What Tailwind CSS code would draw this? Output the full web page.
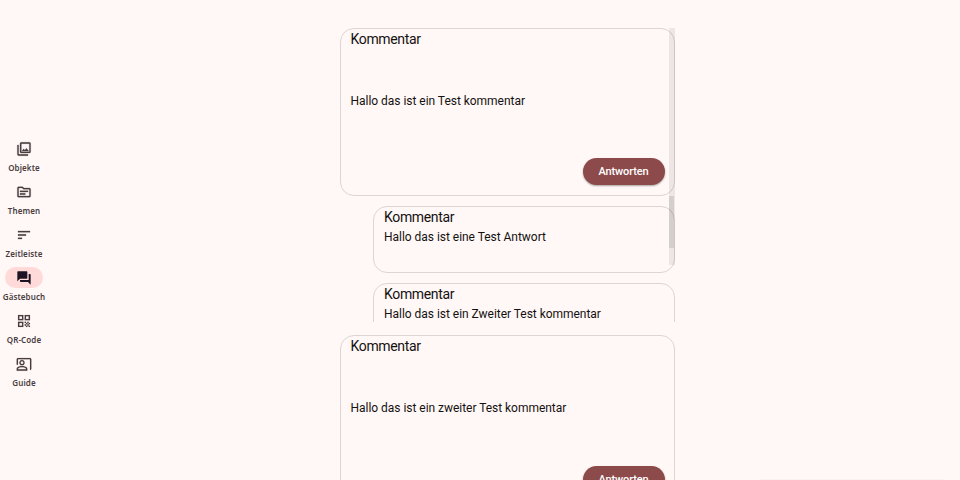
<!DOCTYPE html>
<html lang="de">
<head>
<meta charset="utf-8">
<title>Gästebuch</title>
<script src="https://cdn.jsdelivr.net/npm/@tailwindcss/browser@4"></script>
</head>
<body class="h-[480px] w-[960px] overflow-hidden bg-[#fff8f6] font-[Roboto,sans-serif] text-[#201a1a]">
<div class="relative flex h-[480px] overflow-hidden">
  <nav class="flex w-12 shrink-0 flex-col pt-[138px] text-center font-['Noto_Sans','Open_Sans',sans-serif] text-[8px] leading-[11px] font-semibold tracking-[0.1px] whitespace-nowrap text-[#4a3d41]">
    <a class="flex h-[43px] flex-col items-center gap-[3px]"><span class="flex h-[21px] w-[38px] items-center justify-center rounded-full"><svg class="size-4" viewBox="0 0 24 24" fill="currentColor" stroke="currentColor" stroke-width="0.4"><path d="M20 4v12H8V4h12m0-2H8c-1.1 0-2 .9-2 2v12c0 1.1.9 2 2 2h12c1.1 0 2-.9 2-2V4c0-1.1-.9-2-2-2zm-8.5 9.67l1.69 2.26 2.48-3.1L19 15H9zM2 6v14c0 1.1.9 2 2 2h14v-2H4V6H2z"/></svg></span><span>Objekte</span></a>
    <a class="flex h-[43px] flex-col items-center gap-[3px]"><span class="flex h-[21px] w-[38px] items-center justify-center rounded-full"><svg class="size-4" viewBox="0 0 24 24" fill="currentColor" stroke="currentColor" stroke-width="0.4"><path d="M20 6h-8l-2-2H4c-1.1 0-2 .9-2 2v12c0 1.1.9 2 2 2h16c1.1 0 2-.9 2-2V8c0-1.1-.9-2-2-2zm0 12H4V6h5.17l2 2H20v10zm-2-6H6v-2h12v2zm-4 4H6v-2h8v2z"/></svg></span><span>Themen</span></a>
    <a class="flex h-[43px] flex-col items-center gap-[3px]"><span class="flex h-[21px] w-[38px] items-center justify-center rounded-full"><svg class="size-4" viewBox="0 0 24 24" fill="currentColor" stroke="currentColor" stroke-width="0.4"><path d="M3 18h6v-2H3v2zM3 6v2h18V6H3zm0 7h12v-2H3v2z"/></svg></span><span>Zeitleiste</span></a>
    <a class="flex h-[43px] flex-col items-center gap-[3px]"><span class="flex h-[21px] w-[38px] items-center justify-center rounded-full bg-[#ffdad9] text-[#1c1424]"><svg class="size-4" viewBox="0 0 24 24" fill="currentColor"><path d="M21 6h-2v9H6v2c0 .55.45 1 1 1h11l4 4V7c0-.55-.45-1-1-1zm-4 6V3c0-.55-.45-1-1-1H3c-.55 0-1 .45-1 1v14l4-4h10c.55 0 1-.45 1-1z"/></svg></span><span>Gästebuch</span></a>
    <a class="flex h-[43px] flex-col items-center gap-[3px]"><span class="flex h-[21px] w-[38px] items-center justify-center rounded-full"><svg class="size-4" viewBox="0 0 24 24" fill="currentColor" stroke="currentColor" stroke-width="0.2"><path d="M3 11h8V3H3v8zm2-6h4v4H5V5zM3 21h8v-8H3v8zm2-6h4v4H5v-4zM13 3v8h8V3h-8zm6 6h-4V5h4v4zM19 19h2v2h-2zM13 13h2v2h-2zM15 15h2v2h-2zM13 17h2v2h-2zM15 19h2v2h-2zM17 17h2v2h-2zM17 13h2v2h-2zM19 15h2v2h-2z"/></svg></span><span>QR-Code</span></a>
    <a class="flex h-[43px] flex-col items-center gap-[3px]"><span class="flex h-[21px] w-[38px] items-center justify-center rounded-full"><svg class="size-4" viewBox="0 0 24 24" fill="currentColor" stroke="currentColor" stroke-width="0.2"><path d="M21 3H3c-1.1 0-2 .9-2 2v8h2V5h18v16c1.1 0 2-.9 2-2V5c0-1.1-.9-2-2-2z"/><path d="M9 14c2.21 0 4-1.79 4-4s-1.79-4-4-4-4 1.79-4 4 1.79 4 4 4zm0-6c1.1 0 2 .9 2 2s-.9 2-2 2-2-.9-2-2 .9-2 2-2z"/><path d="M15.39 16.56C13.71 15.7 11.53 15 9 15s-4.71.7-6.39 1.56C1.61 17.07 1 18.1 1 19.22V22h16v-2.78c0-1.12-.61-2.15-1.61-2.66zM15 20H3v-.78c0-.38.2-.72.52-.88C4.71 17.73 6.63 17 9 17s4.29.73 5.48 1.34c.32.16.52.5.52.88V20z"/></svg></span><span>Guide</span></a>
  </nav>
  <main class="ml-[292px] flex w-[335px] flex-col gap-[13px] pt-7 text-[#151111]">
    <section class="relative h-[294px] shrink-0 overflow-hidden">
      <div class="flex flex-col gap-[10px]">
        <article class="flex h-[168px] flex-col rounded-[14px] border border-[#ddd4d3] px-[9.5px] pb-[10px]">
          <h2 class="mt-px text-[14px] leading-[18px] tracking-[-0.35px]">Kommentar</h2>
          <p class="mt-[45px] text-[12px] leading-4 tracking-[-0.03px]">Hallo das ist ein Test kommentar</p>
          <button class="mt-auto h-[27px] w-[82px] self-end rounded-full bg-[#8c4a4b] pt-px text-[11px] font-medium tracking-[-0.15px] text-white shadow-[0_1px_2px_rgba(0,0,0,0.35)]">Antworten</button>
        </article>
        <article class="ml-[33px] h-[67px] rounded-[14px] border border-[#ddd4d3] px-[10px]">
          <h2 class="mt-px text-[14px] leading-[18px] tracking-[-0.35px]">Kommentar</h2>
          <p class="mt-[3px] text-[12px] leading-4 tracking-[-0.03px]">Hallo das ist eine Test Antwort</p>
        </article>
        <article class="ml-[33px] h-[67px] rounded-[14px] border border-[#ddd4d3] px-[10px]">
          <h2 class="mt-px text-[14px] leading-[18px] tracking-[-0.35px]">Kommentar</h2>
          <p class="mt-[3px] text-[12px] leading-4 tracking-[-0.03px]">Hallo das ist ein Zweiter Test kommentar</p>
        </article>
      </div>
      <div class="absolute top-0 right-0 h-[237px] w-[6px] bg-black/7"><div class="mt-[168px] h-[52px] w-[5px] bg-black/10"></div></div>
    </section>
    <article class="flex h-[168px] shrink-0 flex-col rounded-[14px] border border-[#ddd4d3] px-[9.5px] pb-[9px]">
      <h2 class="mt-px text-[14px] leading-[18px] tracking-[-0.35px]">Kommentar</h2>
      <p class="mt-[45px] text-[12px] leading-4 tracking-[-0.03px]">Hallo das ist ein zweiter Test kommentar</p>
      <button class="mt-auto h-[27px] w-[82px] self-end rounded-full bg-[#8c4a4b] pt-px text-[11px] font-medium tracking-[-0.15px] text-white shadow-[0_1px_2px_rgba(0,0,0,0.35)]">Antworten</button>
    </article>
  </main>
  <div class="absolute right-[15px] bottom-0 h-px w-[185px] bg-[#faf1ef]"></div>
</div>
</body>
</html>
